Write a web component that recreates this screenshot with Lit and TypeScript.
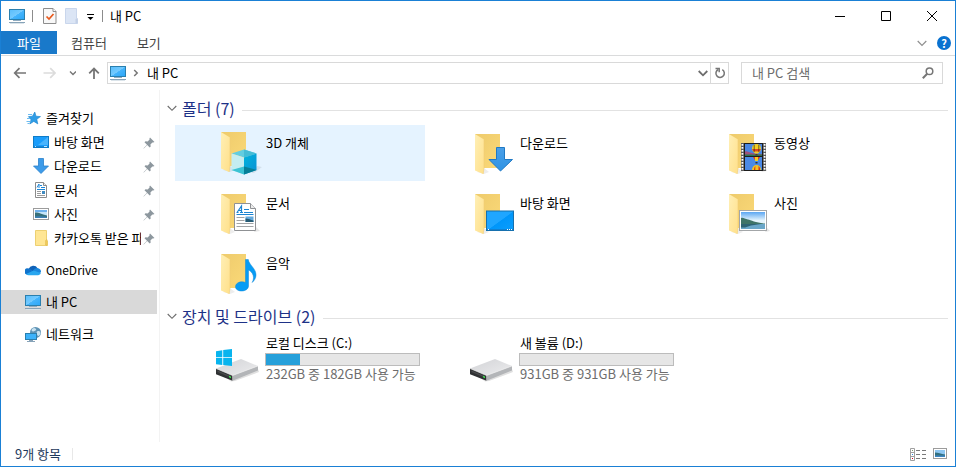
import { LitElement, html, svg, css, TemplateResult } from "lit";
import { customElement, property, state } from "lit/decorators.js";
import { classMap } from "lit/directives/class-map.js";
import { styleMap } from "lit/directives/style-map.js";

/* ---------- 16px icons ---------- */

const pcIcon = html`<svg width="16" height="16" viewBox="0 0 16 16" aria-hidden="true">
  <defs><linearGradient id="pc" x1="0" y1="0" x2="1" y2="1">
    <stop offset="0" stop-color="#58bdfc" /><stop offset=".5" stop-color="#74cafe" /><stop offset=".52" stop-color="#45b4fc" /><stop offset="1" stop-color="#2aa6f8" />
  </linearGradient></defs>
  <rect x=".5" y="1.5" width="15" height="10" fill="url(#pc)" stroke="#2a7fae" />
  <rect x="7" y="12" width="2" height="1" fill="#9db4c4" />
  <rect x="4" y="12" width="8" height="1" fill="#8fabc0" />
  <rect x="0" y="14" width="16" height="1" fill="#87a3b8" />
  <rect x="1" y="15" width="14" height="1" fill="#dbe4ea" />
</svg>`;

const starIcon = html`<svg width="16" height="16" viewBox="0 0 16 16" aria-hidden="true">
  <path d="M9.800 2 11 6.200l4.500.4-3.700 2.700 1 4.600-4-2.500-4 2.600L6 9.700 3.400 6.600 7.400 6.200z" fill="#2f9de6" stroke="#1b83cd" stroke-width=".6" />
  <path d="M3 4.500h4M2 8.500h3M1.500 11.500h4M2.500 13.500h2" stroke="#6dbcf0" fill="none" />
</svg>`;

const desktopIcon = html`<svg width="16" height="16" viewBox="0 0 16 16" aria-hidden="true">
  <rect x=".5" y="2.500" width="15" height="11" fill="#1a9dfb" stroke="#0f7cc8" />
  <path d="M15 3v8H5z" fill="#4ab4fc" />
  <path d="M1 12.500h14" stroke="#1586d8" /><path d="M2 12.500h1M11 12.500h3" stroke="#bfe3fd" />
</svg>`;

const downloadIcon = html`<svg width="16" height="16" viewBox="0 0 16 16" aria-hidden="true">
  <path d="M5.500.5h5v7.500h5L8 15.500.5 8h5z" fill="#3d9be9" stroke="#2a82cb" stroke-width=".8" />
</svg>`;

const documentIcon = html`<svg width="16" height="16" viewBox="0 0 16 16" aria-hidden="true">
  <path d="M2.500.5h8l3 3v12h-11z" fill="#fff" stroke="#8b8b8b" />
  <path d="M10.500.5v3h3" fill="#eee" stroke="#8b8b8b" />
  <path d="M4 5.500 6 2v4M7 3.500h2M8 5.500h4M4 7.500h8" stroke="#1c86d8" fill="none" />
  <path d="M4 9.500h4M4 11.500h4M4 13.500h8" stroke="#9a9a9a" />
  <path d="M9 9h3v3H9z" fill="#3f8ac0" />
</svg>`;

const pictureIcon = html`<svg width="16" height="16" viewBox="0 0 16 16" aria-hidden="true">
  <rect x=".5" y="2.500" width="15" height="11" fill="#fff" stroke="#9c9c9c" />
  <rect x="2" y="4" width="12" height="8" fill="#c4e4f8" />
  <rect x="2" y="4" width="12" height="2" fill="#6fb2ee" />
  <path d="M2 6.500c3-.5 6 1.500 12 3V12H2z" fill="#37707a" />
  <path d="M2 10.500c4-.6 8-.4 12 .4V12H2z" fill="#3c7fb4" />
</svg>`;

const folderIcon = html`<svg width="16" height="16" viewBox="0 0 16 16" aria-hidden="true">
  <path d="M2.500.5h11v9.500l1 1v4.500h-12z" fill="#ffe694" stroke="#e9c65a" stroke-width=".8" />
  <path d="M12.500 15V10.500l1.500-1v6z" fill="#f3cf62" stroke="#dfb748" stroke-width=".5" />
</svg>`;

const oneDriveIcon = html`<svg width="16" height="16" viewBox="0 0 16 16" aria-hidden="true">
  <path d="M3.600 7A5 5 0 0 1 12.600 6.200L9 10z" fill="#0f62b8" />
  <path d="M3.800 6.500 12 11 1.500 12.500A3.200 3.200 0 0 1 3.800 6.500z" fill="#1073cc" />
  <path d="M8.200 8.600a4 4 0 0 1 4.200-2.600c2.600.3 3.800 2.200 3.600 4.200l-3 1.500z" fill="#1a86dc" />
  <path d="M1.200 12 8.500 8.600 15.800 11c-.4 1.400-1.400 2.200-2.800 2.200H3.500c-1 0-1.800-.4-2.300-1.200z" fill="#29a6ef" />
</svg>`;

const networkIcon = html`<svg width="16" height="16" viewBox="0 0 16 16" aria-hidden="true">
  <circle cx="10.500" cy="6.500" r="5.500" fill="#5e93b5" />
  <path d="M7 3c2-1.500 3-1 4 0S9 5.500 8 5.500 6 4.500 7 3zM12 5.500c2-1 3 0 3.400 1s-1 3.500-2 3.500S11 7 12 5.500z" fill="#c8e2f0" />
  <rect x=".5" y="7.500" width="11" height="6" fill="#3cb2fa" stroke="#2a7fae" />
  <path d="M4 14.500h4M2 15.500h8" stroke="#87a3b8" />
</svg>`;

const pinIcon = html`<svg width="12" height="14" viewBox="0 0 12 14" aria-hidden="true">
  <path d="M7 2.500 11.500 7l-1.300.6-.8-.2-2 2 .3 2.100-1 1L4.200 10 .8 13.500.5 13.200 4 9.800 1.500 7.300l1-1 2.100.3 2-2-.2-.8z" fill="#8d979e" />
</svg>`;

/* ---------- 48px icons ---------- */

const folderBase = svg`
  <path d="M6 5h25v34H10z" fill="url(#fb)" />
  <path d="M8 43l7 2 5-2-5-4z" fill="#000" opacity=".07" />
  <path d="M6 5l9 5.500V39l-.8 6L6 41.500z" fill="url(#ff)" />
  <path d="M15 10.500V39l-.8 6" fill="none" stroke="#f1cf77" stroke-width=".6" />`;

const gradients = svg`<defs>
  <linearGradient id="fb" x1="0" y1="0" x2="1" y2="1"><stop offset="0" stop-color="#eecb6c" /><stop offset="1" stop-color="#fbd978" /></linearGradient>
  <linearGradient id="ff" x1="0" y1="0" x2="1" y2="1"><stop offset="0" stop-color="#ffefb5" /><stop offset="1" stop-color="#ffe08a" /></linearGradient>
  <linearGradient id="sky" x1="0" y1="0" x2="0" y2="1"><stop offset="0" stop-color="#5ba6f2" /><stop offset=".5" stop-color="#e6f5fd" /></linearGradient>
  <linearGradient id="scr" x1="0" y1="0" x2="1" y2="1"><stop offset="0" stop-color="#1fa6ff" /><stop offset=".5" stop-color="#1fa6ff" /><stop offset=".52" stop-color="#0096fa" /><stop offset="1" stop-color="#0c9efc" /></linearGradient>
  <linearGradient id="arr" x1="0" y1="0" x2="0" y2="1"><stop offset="0" stop-color="#4a9fe8" /><stop offset="1" stop-color="#2f93e4" /></linearGradient>
  <linearGradient id="dt" x1="0" y1="0" x2="1" y2="1"><stop offset="0" stop-color="#d2d3d6" /><stop offset="1" stop-color="#ececee" /></linearGradient>
  <linearGradient id="cr" x1="0" y1="0" x2="1" y2="1"><stop offset="0" stop-color="#00b3dc" /><stop offset="1" stop-color="#0a90d4" /></linearGradient>
</defs>`;

const big = (body: unknown, base = true) => html`<svg width="48" height="48" viewBox="0 0 48 48" aria-hidden="true">${gradients}${base ? folderBase : ""}${body}</svg>`;

const cubeBig = html`<svg width="48" height="48" viewBox="0 0 48 48" aria-hidden="true">${gradients}
  <g transform="translate(0 -2)">${folderBase}</g>
  <path d="M36 44l6-7 5 1-8 6z" fill="#000" opacity=".08" />
  <path d="M29 20.500l12.500 4L29 28.500 16.500 24.500z" fill="#62cde0" />
  <path d="M29 20.500l12.500 4-12.500 4z" fill="#45bcd6" />
  <path d="M16.500 24.500L29 28.500V45.500l-12.500-4.500z" fill="#c4edf1" />
  <path d="M41.500 24.500L29 28.500V45.500l12.500-4.500z" fill="url(#cr)" />
  <path d="M16.500 41L29 37.500v8z" fill="#3cc3d4" />
  <path d="M41.500 41L29 37.500v8z" fill="#067f98" />
</svg>`;

const downloadBig = big(svg`<path d="M27.500 18.500h8V30.500h8L31.500 42 20 30.500h7.500z" fill="url(#arr)" stroke="#2079c4" />`);

const videoBig = big(svg`
  <path d="M38 43l6-1-1-3z" fill="#000" opacity=".1" />
  <rect x="18" y="14" width="25" height="28" fill="#5b5b5b" />
  <rect x="21" y="14" width="19" height="28" fill="#1d1d1d" />
  <rect x="22" y="15" width="17" height="12" fill="#4a86e2" />
  <rect x="22" y="28" width="17" height="13" fill="#4b8ae6" />
  <path d="M22 22.500c2-1 4 1 7 1.500s6 1 10 1V27H22z" fill="#a0527c" /><path d="M22 25.500h17V27H22z" fill="#2b7550" />
  <path d="M29 19.500a4.500 4.500 0 0 1 9 0c0 2-1.500 3.500-3 5h-3c-1.500-1.500-3-3-3-5z" fill="#f3cf22" />
  <path d="M29 20h9l-1.500 2.500h-6z" fill="#e04a22" />
  <path d="M31.200 15.800v7M35.800 15.800v7" stroke="#3a2a20" stroke-width=".7" /><rect x="32.500" y="25" width="2" height="1.500" fill="#5a3b1a" />
  <path d="M30 28h7l-2.500 4h-2z" fill="#e8371f" /><path d="M32 28h3v4h-3z" fill="#f3cf22" /><rect x="32.500" y="33" width="2" height="1.500" fill="#333" />
  <path d="M29 41a4.500 5 0 0 1 9 0z" fill="#f3c322" /><path d="M31 41a3 5 0 0 1 1.300-4v4zM35.500 37a4 4 0 0 1 1.500 4h-1.500z" fill="#d52f1c" />
  <g fill="#fff">${[15, 18, 21, 24, 27, 30, 33, 36, 39].map((y) => svg`<rect x="18.500" y="${y}" width="1.800" height="1.700" /><rect x="40.700" y="${y}" width="1.800" height="1.700" />`)}</g>`);

const documentBig = big(svg`
  <path d="M39 43l6-1-4-4z" fill="#000" opacity=".1" />
  <path d="M19.500 14.500h16l5 5v22h-21z" fill="#fff" stroke="#8f9194" />
  <path d="M35.500 14.500v5h5" fill="#ececec" stroke="#8f9194" />
  <path d="M22 23.500 26.500 17v6.500M23.500 21.500h3M21.500 23.500h2M25 23.500h3" stroke="#1b84d2" stroke-width="1.200" fill="none" />
  <path d="M29 20.500h5M29 23.500h9M21.500 25.500h17" stroke="#1b84d2" />
  <path d="M21.500 28.500h8M21.500 31.500h8M21.500 34.500h17M21.500 37.500h17" stroke="#a2a4a6" />
  <rect x="30.500" y="27.500" width="8" height="5.500" fill="#63a9dd" /><path d="M30.500 29.500c3 0 5 1.500 8 2V33h-8z" fill="#255a73" />`);

const desktopBig = big(svg`
  <rect x="17.500" y="22" width="27" height="19.500" fill="url(#scr)" stroke="#1670ae" />
  <path d="M18 40.500h26" stroke="#1181d2" /><path d="M19 40.500h1M38 40.500h1M40 40.500h1M42 40.500h1" stroke="#fff" />`);

const pictureBig = big(svg`
  <path d="M42 43l5-1-3-3z" fill="#000" opacity=".1" />
  <rect x="16.500" y="21.500" width="27" height="20" fill="#fff" stroke="#a3a6a8" />
  <rect x="18" y="23" width="24" height="17" fill="url(#sky)" />
  <path d="M18 29c2-1 4 1 7 1.500s8 3.500 17 4V36H18z" fill="#3f7468" />
  <path d="M18 35h24v5H18z" fill="#6aa7c9" /><path d="M18 35h20l-10 1.500L22 38.500h-4z" fill="#2f6474" />`);

const musicBig = big(svg`
  <path d="M30.500 10.500h2.800c.4 5 7.700 9 7.700 15.500 0 3-1.800 5.800-3.800 7.500 1.200-2.500 1.600-4.500 1-7-.8-3-3-4.800-4.700-5.500V37c0 3-3.200 5-7 5-3.500 0-6-1.800-6-4.300 0-2.800 3-4.900 6.500-4.900 1.300 0 2.500.2 3.500.7z" fill="#069cf5" stroke="#0b86d8" stroke-width=".5" />`);

const driveBody = svg`
  <path d="M1 33l16 8 26-9 1 3-24 9-4 .5z" fill="#000" opacity=".12" />
  <path d="M1 31.500 26 22l17 7-25.500 9.500z" fill="url(#dt)" />
  <path d="M1 31.500l16.500 7v5.200L1 37.200z" fill="#2f3133" />
  <path d="M2.500 33.500l13.500 5.700v1.500L2.500 35z" fill="#48494b" />
  <path d="M43 29v4.500l-25.500 10.200v-5.200z" fill="#b3b5b8" />
  <path d="M1 31.500l16.500 7L43 29" fill="none" stroke="#f3f3f4" stroke-width=".6" />
  <path d="M14 38.800l2 .9v1.500l-2-.9z" fill="#3bea4a" />`;

const driveBig = big(driveBody, false);
const systemDriveBig = big(svg`${driveBody}
  <path d="M1 14.200l6.300-1v7H1zM8.200 13.100 17 12v8.200H8.200zM1 21.100h6.300v7L1 27.200zM8.200 21.100H17V29l-8.800-1z" fill="#08b4ee" />`, false);

const chevron = (w: number, color: string, weight = 1) => html`<svg width="${w}" height="${w}" viewBox="0 0 10 10" aria-hidden="true">
  <path d="M.7 3 5 7.300 9.300 3" fill="none" stroke="${color}" stroke-width="${weight}" /></svg>`;

/* ---------- data ---------- */

interface NavItem { id: string; label: string; icon: TemplateResult; child?: boolean; gap?: boolean; latin?: boolean }
interface Folder { label: string; icon: TemplateResult }
interface Drive { label: string; icon: TemplateResult; used: number; info: string }

const NAV: NavItem[] = [
  { id: "fav", label: "즐겨찾기", icon: starIcon },
  { id: "desk", label: "바탕 화면", icon: desktopIcon, child: true },
  { id: "down", label: "다운로드", icon: downloadIcon, child: true },
  { id: "docs", label: "문서", icon: documentIcon, child: true },
  { id: "pics", label: "사진", icon: pictureIcon, child: true },
  { id: "kakao", label: "카카오톡 받은 파일", icon: folderIcon, child: true },
  { id: "one", label: "OneDrive", icon: oneDriveIcon, gap: true, latin: true },
  { id: "pc", label: "내 PC", icon: pcIcon, gap: true },
  { id: "net", label: "네트워크", icon: networkIcon, gap: true },
];

const FOLDERS: Folder[] = [
  { label: "3D 개체", icon: cubeBig },
  { label: "다운로드", icon: downloadBig },
  { label: "동영상", icon: videoBig },
  { label: "문서", icon: documentBig },
  { label: "바탕 화면", icon: desktopBig },
  { label: "사진", icon: pictureBig },
  { label: "음악", icon: musicBig },
];

const DRIVES: Drive[] = [
  { label: "로컬 디스크 (C:)", icon: systemDriveBig, used: 22.5, info: "232GB 중 182GB 사용 가능" },
  { label: "새 볼륨 (D:)", icon: driveBig, used: 0, info: "931GB 중 931GB 사용 가능" },
];

const reset = css`
  * { box-sizing: border-box; }
  svg { display: block; flex: none; }
  button { display: flex; align-items: center; justify-content: center; margin: 0; padding: 0; border: 0; background: none; font: inherit; color: inherit; }
  a { color: inherit; text-decoration: none; }
`;

@customElement("title-bar")
class TitleBar extends LitElement {
  static styles = [reset, css`
    :host { display: flex; align-items: center; height: 30px; padding-left: 8px; }
    .sep { width: 1px; height: 12px; background: #8c8c8c; }
    .check { margin-left: 10px; }
    .new { margin-left: 8px; }
    .more { margin-left: 7px; }
    .first { margin-left: 7px; }
    .second { margin-left: 6px; }
    .title { margin: 0 auto 0 7px; font-size: 13px; font-weight: 400; line-height: 20px; color: #000; }
    .win { width: 46px; height: 30px; }
  `];
  render() {
    return html`
      ${pcIcon}<span class="sep first"></span>
      <button class="check" aria-label="속성"><svg width="14" height="16" viewBox="0 0 14 16">
        <path d="M.5.5h9.500l3 3v12H.5z" fill="#f8f8f8" stroke="#8d8d8d" /><path d="M10 .5v3h3" fill="#fff" stroke="#8d8d8d" />
        <path d="M3.500 8.500 6 11l4.500-5" fill="none" stroke="#e8591c" stroke-width="1.700" /></svg></button>
      <button class="new" aria-label="새 폴더"><svg width="14" height="16" viewBox="0 0 14 16">
        <path d="M.5.5h11V10l1 1v4.500H.5z" fill="#dbe5f5" stroke="#c9d6ec" /><path d="M10.500 15v-4l2-1v5.500z" fill="#c3d0e6" /></svg></button>
      <button class="more" aria-label="빠른 실행 도구 모음 사용자 지정"><svg width="10" height="10" viewBox="0 0 10 10">
        <path d="M1 3.500h7" stroke="#000" /><path d="M1.500 6h6l-3 3z" /></svg></button>
      <span class="sep second"></span>
      <h1 class="title">내 PC</h1>
      <button class="win" aria-label="최소화"><svg width="12" height="12" viewBox="0 0 12 12"><path d="M1 6.500h10" stroke="#000" /></svg></button>
      <button class="win" aria-label="최대화"><svg width="12" height="12" viewBox="0 0 12 12"><path d="M1.500 1.500h9v9h-9z" fill="none" stroke="#000" /></svg></button>
      <button class="win" aria-label="닫기"><svg width="12" height="12" viewBox="0 0 12 12"><path d="M1 1l10 10M11 1 1 11" stroke="#000" /></svg></button>`;
  }
}

@customElement("ribbon-tabs")
class RibbonTabs extends LitElement {
  static styles = [reset, css`
    :host { display: flex; align-items: flex-start; height: 25px; border-bottom: 1px solid #dadbdc; font-size: 13px; line-height: 20px; color: #444; }
    .tab { height: 23px; padding: 0 16px 0 14px; }
    .file { width: 56px; padding: 0; background: #1979ca; color: #fff; }
    .expand { height: 24px; margin-left: auto; }
    .help { height: 24px; margin: 0 4px 0 10px; }
    .mark { width: 14px; height: 14px; border-radius: 50%; background: #0a72d0; color: #fff; font-size: 11px; font-weight: 700; line-height: 14px; text-align: center; }
  `];
  render() {
    return html`
      <button class="tab file">파일</button>
      <button class="tab">컴퓨터</button>
      <button class="tab">보기</button>
      <button class="expand" aria-label="리본 확장">${chevron(10, "#8f8f8f", 1.2)}</button>
      <button class="help" aria-label="도움말"><span class="mark">?</span></button>`;
  }
}

@customElement("address-bar")
class AddressBar extends LitElement {
  static styles = [reset, css`
    :host { display: flex; align-items: center; height: 34px; padding: 0 12px 0 4px; gap: 2px; font-size: 13px; line-height: 20px; }
    .nav { width: 28px; height: 22px; }
    .recent { width: 14px; height: 22px; }
    .up { width: 24px; height: 22px; }
    .box { flex: 1; display: flex; align-items: center; min-width: 0; height: 22px; border: 1px solid #d9d9d9; }
    .box > svg { margin: 0 5px 0 2px; }
    .crumb { margin: 0 auto 0 3px; color: #000; }
    .drop { width: 14px; height: 20px; }
    .refresh { width: 18px; height: 20px; border-left: 1px solid #d9d9d9; }
    .search { flex: 0 1 202px; display: flex; align-items: center; min-width: 0; height: 22px; margin-left: 10px; padding: 0 8px 0 10px; border: 1px solid #d9d9d9; }
    .input { flex: 1; min-width: 0; height: 20px; padding: 0; border: 0; outline: 0; background: none; font: inherit; color: #333; }
    .input::placeholder { color: #6d6d6d; opacity: 1; }
  `];
  render() {
    return html`
      <button class="nav" aria-label="뒤로"><svg width="14" height="12" viewBox="0 0 14 12"><path d="M14 6H2.500M7.500 1.200 2.700 6l4.800 4.800" fill="none" stroke="#767676" stroke-width="1.700" /></svg></button>
      <button class="nav" aria-label="앞으로"><svg width="14" height="12" viewBox="0 0 14 12"><path d="M1.500 6h11.500M8.200 1.200 13 6l-4.800 4.800" fill="none" stroke="#dcdcdc" stroke-width="1.700" /></svg></button>
      <button class="recent" aria-label="최근 위치"><svg width="8" height="6" viewBox="0 0 8 6"><path d="M2 1.500 5 4.500l3-3" fill="none" stroke="#767676" stroke-width="1.400" /></svg></button>
      <button class="up" aria-label="위로"><svg width="14" height="12" viewBox="0 0 14 12"><path d="M8 12V1.500M3.200 6.300 8 1.500l4.800 4.800" fill="none" stroke="#767676" stroke-width="1.800" /></svg></button>
      <div class="box">
        ${pcIcon}
        <svg width="6" height="8" viewBox="0 0 6 8" aria-hidden="true"><path d="M1.200 1 4.200 4l-3 3" fill="none" stroke="#767676" stroke-width="1.500" /></svg>
        <button class="crumb">내 PC</button>
        <button class="drop" aria-label="이전 위치">${chevron(10, "#6d6d6d", 1.8)}</button>
        <button class="refresh" aria-label="새로 고침"><svg width="12" height="12" viewBox="0 0 12 12"><path d="M4.300 2.500A4.200 4.200 0 1 0 8.300 2.700" fill="none" stroke="#767676" stroke-width="1.500" /><path d="M1.500 1.500h3.700v3.700" fill="none" stroke="#767676" stroke-width="1.500" /></svg></button>
      </div>
      <div class="search">
        <input class="input" type="text" aria-label="내 PC 검색" placeholder="내 PC 검색" />
        <svg width="12" height="12" viewBox="0 0 12 12" aria-hidden="true"><circle cx="7.500" cy="4.300" r="3.300" fill="none" stroke="#767676" stroke-width="1.500" /><path d="M5.200 6.800.8 11.200" stroke="#767676" stroke-width="2" /></svg>
      </div>`;
  }
}

@customElement("nav-pane")
class NavPane extends LitElement {
  @state() selected = "pc";
  static styles = [reset, css`
    :host { display: block; flex: none; width: 159px; padding: 16px 2px 16px 0; border-right: 1px solid #f3f3f3; font-size: 13px; line-height: 20px; color: #000; }
    .list { margin: 0; padding: 0; list-style: none; }
    .gap { margin-top: 8px; }
    .item { display: flex; align-items: center; gap: 5px; height: 24px; padding: 0 2px 0 24px; }
    .child { padding-left: 32px; }
    .on { background: #d9d9d9; }
    .label { flex: 1; min-width: 0; overflow: hidden; white-space: nowrap; }
    .child .label { margin-right: -3px; }
    .latin { font-size: 12px; }
  `];
  render() {
    return html`<nav><ul class="list">${NAV.map((n) => html`
      <li class=${classMap({ gap: !!n.gap })}>
        <a href="#${n.id}" class=${classMap({ item: true, child: !!n.child, on: n.id === this.selected })}
          @click=${(e: Event) => { e.preventDefault(); this.selected = n.id; }}>
          ${n.icon}<span class=${classMap({ label: true, latin: !!n.latin })}>${n.label}</span>${n.child ? pinIcon : ""}
        </a>
      </li>`)}</ul></nav>`;
  }
}

@customElement("item-group")
class ItemGroup extends LitElement {
  @property() heading = "";
  static styles = [reset, css`
    :host { display: block; }
    .head { display: flex; align-items: center; height: 32px; padding: 0 7px 2px 7px; }
    .toggle { gap: 5px; font-size: 16px; line-height: 24px; color: #1e3287; white-space: nowrap; }
    .head h2 { margin: 0; font-weight: 400; font-size: 16px; }
    .line { flex: 1; height: 1px; margin: 4px 0 0 7px; background: #e2e2e2; }
    .grid { display: grid; grid-template-columns: repeat(auto-fill, 250px); gap: 4px; padding-left: 15px; }
  `];
  render() {
    return html`<div class="head"><h2><button class="toggle" aria-expanded="true">${chevron(10, "#6d6d6d", 1.1)}${this.heading}</button></h2><span class="line"></span></div>
      <div class="grid"><slot></slot></div>`;
  }
}

@customElement("app-root")
class AppRoot extends LitElement {
  @state() active = 0;
  static styles = [reset, css`
    :host { display: flex; flex-direction: column; box-sizing: border-box; min-height: 100vh; border: 1px solid #1a80d5; background: #fff; font-family: "Noto Sans CJK KR", "Noto Sans", sans-serif; font-size: 13px; line-height: 20px; color: #000; }
    .body { flex: 1; display: flex; }
    .main { flex: 1; min-width: 0; padding: 3px 0 16px; }
    .tile { display: flex; align-items: flex-start; gap: 2px; height: 56px; padding: 4px 0 0 40px; }
    .active { background: #e5f3ff; }
    .name { padding: 4px 0 0 1px; }
    .drive { display: flex; flex-direction: column; width: 155px; margin-top: -4px; white-space: nowrap; }
    .drive .name { padding-top: 0; }
    .bar { height: 13px; border: 1px solid #bcbcbc; background: #e6e6e6; }
    .fill { height: 11px; background: #26a0da; }
    .info { height: 16px; padding-left: 1px; line-height: 16px; color: #6d6d6d; }
    .status { display: flex; align-items: center; height: 24px; padding: 0 7px 0 14px; color: #1e395b; }
    .rule { width: 1px; height: 12px; margin: 0 auto 0 11px; background: #e8e8e8; }
    .view { margin-left: 5px; }
  `];
  render() {
    return html`
      <title-bar></title-bar>
      <ribbon-tabs></ribbon-tabs>
      <address-bar></address-bar>
      <div class="body">
        <nav-pane></nav-pane>
        <main class="main">
          <item-group heading="폴더 (7)">${FOLDERS.map((f, i) => html`
            <a href="#folder" class=${classMap({ tile: true, active: i === this.active })} @click=${(e: Event) => { e.preventDefault(); this.active = i; }}>
              ${f.icon}<span class="name">${f.label}</span>
            </a>`)}
          </item-group>
          <item-group heading="장치 및 드라이브 (2)">${DRIVES.map((d) => html`
            <a href="#drive" class="tile" @click=${(e: Event) => e.preventDefault()}>
              ${d.icon}
              <span class="drive">
                <span class="name">${d.label}</span>
                <span class="bar"><div class="fill" style=${styleMap({ width: `${d.used}%` })}></div></span>
                <span class="info">${d.info}</span>
              </span>
            </a>`)}
          </item-group>
        </main>
      </div>
      <footer class="status">
        <span>9개 항목</span><span class="rule"></span>
        <button class="view" aria-label="자세히"><svg width="17" height="13" viewBox="0 0 17 13">
          <path d="M.5.5h4v12h-4zM.5 4.500h4M.5 8.500h4" fill="#fff" stroke="#a0a0a0" />
          <path d="M2 2.500h1" stroke="#7d9a6a" /><path d="M2 6.500h1" stroke="#2a8be0" /><path d="M2 10.500h1" stroke="#d0021b" />
          <path d="M6 2.500h4M12 2.500h4M6 6.500h4M12 6.500h4M6 10.500h4M12 10.500h4" stroke="#7a7a7a" /></svg></button>
        <button class="view" aria-label="큰 아이콘"><svg width="16" height="12" viewBox="0 0 16 12">
          <rect x="1.500" y=".5" width="13" height="10" fill="#fff" stroke="#9c9c9c" />
          <rect x="3" y="2" width="10" height="7" fill="#8cc6f2" /><path d="M3 4.500c3 0 6 1.500 10 2V9H3z" fill="#33707f" /><path d="M3 7.500h10V9H3z" fill="#3c86c4" /></svg></button>
      </footer>`;
  }
}
